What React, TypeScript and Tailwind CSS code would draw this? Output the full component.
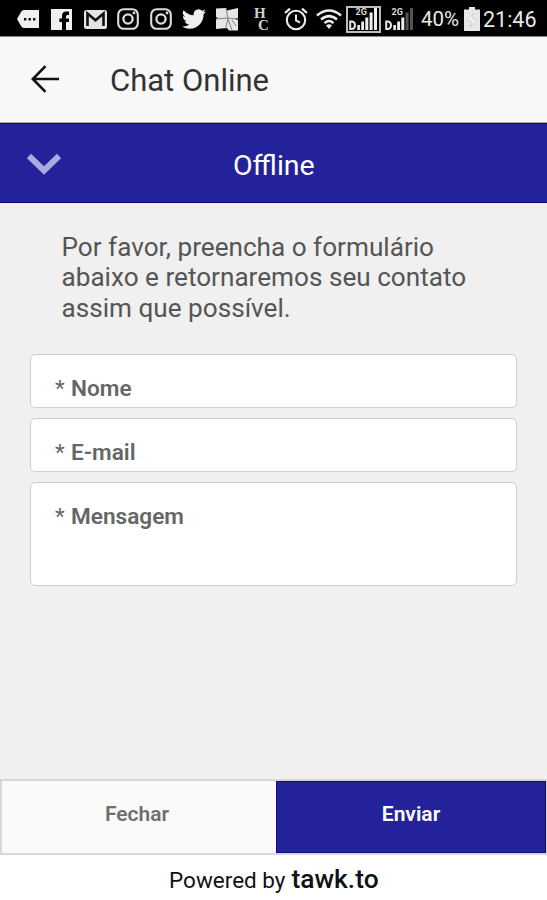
import React from 'react';

function TagIcon() {
  return (
    <svg className="ml-[17px] h-[18px] w-[22px] shrink-0" viewBox="0 0 22 18">
      <path d="M7 0H22V18H7Q5 18 4 16L0 9L4 2Q5 0 7 0Z" fill="#efefef" />
      <path d="M7 8h2.4v2.4H7zM11.5 8h2.4v2.4h-2.4zM16 8h2.4v2.4H16z" fill="#111" />
    </svg>
  );
}

function FacebookIcon() {
  return (
    <svg className="ml-3 h-[21px] w-[21px] shrink-0" viewBox="0 0 21 21">
      <path d="M0 0H21V21H15V13H18V9.5H15V7.5Q15 6 16.3 6H18V2.5H15Q11 2.5 11 7V9.5H8.4V13H11V21H0Z" fill="#efefef" />
    </svg>
  );
}

function GmailIcon() {
  return (
    <svg className="ml-[12px] h-[19px] w-[23px] shrink-0" viewBox="0 0 23 19">
      <rect x="0" y="0" width="23" height="19" rx="2.5" fill="#e4e4e4" />
      <path d="M3.5 16V3.5L11.5 10.2L19.5 3.5V16" fill="none" stroke="#111" strokeWidth="2.6" />
    </svg>
  );
}

function InstagramIcon({ className }: { className: string }) {
  return (
    <svg className={`h-[22px] w-[22px] shrink-0 ${className}`} viewBox="0 0 22 22" fill="none" stroke="#dedede">
      <rect x="1.2" y="1.2" width="19.6" height="19.6" rx="5.5" strokeWidth="2.1" />
      <circle cx="11" cy="11" r="4.6" strokeWidth="2.3" />
      <circle cx="17" cy="5" r="1.4" fill="#dedede" stroke="none" />
    </svg>
  );
}

function TwitterIcon() {
  return (
    <svg className="ml-2.5 h-6 w-6 shrink-0" viewBox="0 0 24 24">
      <path
        fill="#efefef"
        d="M23.95 4.57a10 10 0 0 1-2.82.78 4.96 4.96 0 0 0 2.16-2.73c-.95.56-2 .96-3.13 1.19a4.92 4.92 0 0 0-8.38 4.48C7.69 8.1 4.07 6.13 1.64 3.16a4.93 4.93 0 0 0 1.52 6.57 4.9 4.9 0 0 1-2.23-.61v.06a4.92 4.92 0 0 0 3.95 4.83 5 5 0 0 1-2.21.08 4.94 4.94 0 0 0 4.6 3.42A9.87 9.87 0 0 1 0 19.54a14 14 0 0 0 7.55 2.21c9.05 0 14-7.5 14-13.99 0-.2 0-.42-.02-.63a9.9 9.9 0 0 0 2.42-2.56z"
      />
    </svg>
  );
}

function CollageIcon() {
  return (
    <svg className="ml-[9px] h-6 w-6 shrink-0" viewBox="0 0 24 24">
      <path d="M1 1.5L11 1L12 3.5L23 1V11L20 12L23 13V23.5H14L12 21L1 22V12L3 11L1 10Z" fill="#e6e6e6" />
      <path d="M11 1L13 11.5L10.5 22M1 12L12 11L23 12M13 12L17 23M17 13L21 19" stroke="#777" strokeWidth="0.9" fill="none" />
    </svg>
  );
}

function AlarmIcon() {
  return (
    <svg className="ml-[13px] h-6 w-6 shrink-0" viewBox="0 0 24 24" fill="none" stroke="#ececec">
      <circle cx="12" cy="13" r="9.2" strokeWidth="2.1" />
      <path d="M12 7.5V13.5L16 15.7" strokeWidth="2" />
      <path d="M1 6L6 1.7M18 1.7L23 6" strokeWidth="2.3" />
    </svg>
  );
}

function WifiIcon() {
  return (
    <svg className="ml-2 h-[21px] w-[26px] shrink-0" viewBox="0 0 26 21" fill="none" stroke="#ececec">
      <path d="M1 6.5Q13 -3.5 25 6.5" strokeWidth="2.6" />
      <path d="M5 10.5Q13 3.7 21 10.5" strokeWidth="2.5" />
      <path d="M8.5 14.2Q13 10 17.5 14.2" strokeWidth="2.4" />
      <path d="M10 16.6Q13 14 16 16.6L13 20Z" fill="#ececec" stroke="none" />
    </svg>
  );
}

function SignalMark({ dim }: { dim?: boolean }) {
  return (
    <svg className="h-6 w-[29px] shrink-0" viewBox="0 0 29 24">
      <text x="6.5" y="7.8" fontFamily="Roboto, sans-serif" fontSize="9" fontWeight="700" fill="#ddd">
        2G
      </text>
      <path d="M1.2 14.5H3Q6 15 6 18.2T3 22H1.2Z" fill="none" stroke="#e5e5e5" strokeWidth="2" />
      <path d="M8.3 18h2.6v5H8.3zM12.2 14.5H15V23h-2.8zM16.3 10.5h3V23h-3z" fill="#ededed" />
      <path d="M20.6 5.5h3V23h-3zM25 1h3v22h-3z" fill={dim ? '#545454' : '#ededed'} />
    </svg>
  );
}

function BatteryIcon() {
  return (
    <svg className="ml-[5px] h-6 w-4 shrink-0" viewBox="0 0 16 24">
      <path d="M5 0h6v2.5H16V24H0V2.5H5Z" fill="#e7e7e7" />
      <path d="M9.5 6L4 14h4L6.5 20L12 12H8Z" fill="#fff" stroke="#c6c6c6" strokeWidth="0.7" />
    </svg>
  );
}

function StatusBar() {
  return (
    <div className="flex h-[37px] items-center overflow-hidden border-b border-[#858585] bg-black pt-[2px]">
      <TagIcon />
      <FacebookIcon />
      <GmailIcon />
      <InstagramIcon className="ml-2.5" />
      <InstagramIcon className="ml-[11px]" />
      <TwitterIcon />
      <CollageIcon />
      <div className="ml-[15px] flex w-[17px] shrink-0 flex-col font-['Liberation_Serif',serif] text-[15px] leading-[12px] font-bold text-[#d0d0d0]">
        <span className="h-3">H</span>
        <span className="h-3 pl-1">C</span>
      </div>
      <AlarmIcon />
      <WifiIcon />
      <div className="ml-1 flex h-[27px] w-[35px] shrink-0 items-center justify-center border-2 border-[#bdbdbd]">
        <SignalMark />
      </div>
      <div className="ml-[4px] flex w-[29px] shrink-0">
        <SignalMark dim />
      </div>
      <span className="ml-[7px] w-[38px] shrink-0 text-[20.5px] leading-6 whitespace-nowrap text-[#e8e8e8]">40%</span>
      <BatteryIcon />
      <span className="ml-[3px] shrink-0 pt-px text-[21.5px] leading-6 whitespace-nowrap text-[#e8e8e8]">21:46</span>
    </div>
  );
}

function Field({ label, className }: { label: string; className: string }) {
  return (
    <label className={`flex rounded-[5px] border-[1.5px] border-[#cfcfcf] bg-white pl-[24px] text-[22.6px] leading-[26px] text-[#666] ${className}`}>
      <span className="w-4">*</span>
      <span className="font-semibold">{label}</span>
    </label>
  );
}

export default function App() {
  return (
    <div className="flex h-[900px] w-[547px] flex-col overflow-hidden bg-white font-[Roboto,sans-serif]">
      <StatusBar />
      <header className="flex h-[86px] items-center border-b border-[#aaa] bg-[#f8f8f8]">
        <svg className="mb-px ml-[31px] h-7 w-7" viewBox="0 0 28 28" fill="none" stroke="#111" strokeWidth="2.6">
          <path d="M28 14H2M14.5 1.2L1.8 14L14.5 26.8" />
        </svg>
        <h1 className="ml-[51px] pt-[3px] text-[31px] leading-9 whitespace-nowrap text-[#333]">Chat Online</h1>
      </header>
      <div className="flex h-[80px] items-center border-y border-[#0c0876] bg-[#24229a]">
        <svg className="mt-0.5 ml-[27px] h-[22px] w-[34px]" viewBox="0 0 34 22" fill="none" stroke="#a9aadd" strokeWidth="6">
          <path d="M2 3L17 17.5L32 3" />
        </svg>
        <h2 className="ml-[172px] pt-1.5 text-[28.5px] leading-8 whitespace-nowrap text-white">Offline</h2>
      </div>
      <main className="flex-1 bg-[#f0f0f0] px-[30px] pt-[28.5px]">
        <p className="pl-[31.5px] text-[26.15px] leading-[30.5px] whitespace-nowrap text-[#555]">
          Por favor, preencha o formulário
          <br />
          abaixo e retornaremos seu contato
          <br />
          assim que possível.
        </p>
        <form className="mt-[31px] flex flex-col gap-[10px]">
          <Field label="Nome" className="h-[54px] pt-[20.5px]" />
          <Field label="E-mail" className="h-[54px] pt-[20.5px]" />
          <Field label="Mensagem" className="h-[104px] pt-[20.5px]" />
        </form>
      </main>
      <div className="flex h-[76px] border-2 border-[#d8d8d8] bg-[#fafafa] text-[21px] font-semibold">
        <button className="w-[274px] pr-1 pb-1 text-[#6f6f6f]">Fechar</button>
        <button className="-mr-px flex-1 border border-[#0d0885] bg-[#24229a] pb-1 text-white">Enviar</button>
      </div>
      <footer className="flex h-[45px] items-baseline gap-[6px] pt-[8px] pl-[169px] leading-[32px] whitespace-nowrap text-[#111]">
        <span className="text-[22.5px]">Powered by</span>
        <span className="text-[26.4px] font-medium">tawk.to</span>
      </footer>
    </div>
  );
}
